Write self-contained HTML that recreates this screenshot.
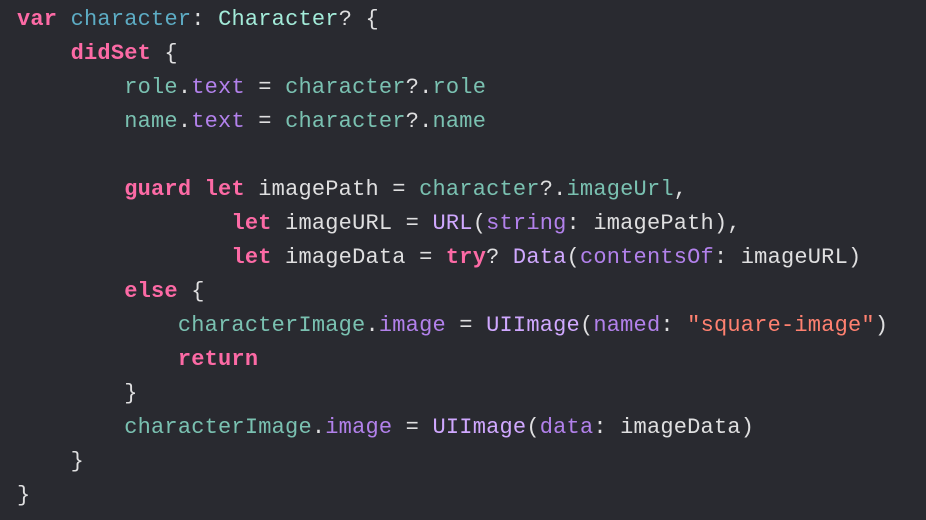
<!DOCTYPE html>
<html><head><meta charset="utf-8"><style>
html,body{margin:0;padding:0;background:#292a30;width:926px;height:520px;overflow:hidden}
pre{margin:0;padding:3px 0 0 17px;font-family:"Liberation Mono",monospace;font-size:22px;letter-spacing:0.2px;line-height:34px;color:#dfdfe0}
.k{color:#fc6aa5;font-weight:bold}
.d{color:#5dacc4}
.t{color:#a3ebd9}
.p{color:#7ac1b1}
.s{color:#b281eb}
.y{color:#d0a8ff}
.r{color:#ff8170}
</style></head><body><pre><span class="k">var</span> <span class="d">character</span>: <span class="t">Character</span>? {
    <span class="k">didSet</span> {
        <span class="p">role</span>.<span class="s">text</span> = <span class="p">character</span>?.<span class="p">role</span>
        <span class="p">name</span>.<span class="s">text</span> = <span class="p">character</span>?.<span class="p">name</span>

        <span class="k">guard</span> <span class="k">let</span> imagePath = <span class="p">character</span>?.<span class="p">imageUrl</span>,
                <span class="k">let</span> imageURL = <span class="y">URL</span>(<span class="s">string</span>: imagePath),
                <span class="k">let</span> imageData = <span class="k">try</span>? <span class="y">Data</span>(<span class="s">contentsOf</span>: imageURL)
        <span class="k">else</span> {
            <span class="p">characterImage</span>.<span class="s">image</span> = <span class="y">UIImage</span>(<span class="s">named</span>: <span class="r">"square-image"</span>)
            <span class="k">return</span>
        }
        <span class="p">characterImage</span>.<span class="s">image</span> = <span class="y">UIImage</span>(<span class="s">data</span>: imageData)
    }
}</pre></body></html>
